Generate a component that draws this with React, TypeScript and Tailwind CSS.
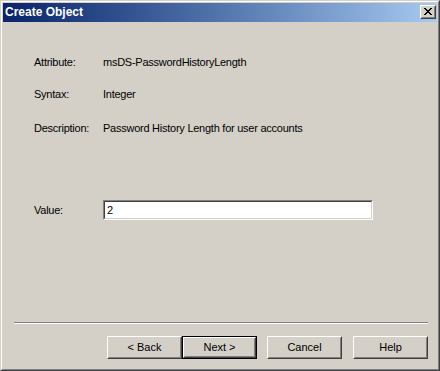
import React from "react";

const font = "font-['Liberation_Sans',Arial,sans-serif]";

function CloseGlyph() {
  const rows = [
    [0, 1, 6, 7],
    [1, 2, 5, 6],
    [2, 3, 4, 5],
    [3, 4],
    [2, 3, 4, 5],
    [1, 2, 5, 6],
    [0, 1, 6, 7],
  ];
  return (
    <svg width="8" height="7" viewBox="0 0 8 7" shapeRendering="crispEdges">
      {rows.map((cols, y) =>
        cols.map((x) => <rect key={`${x}-${y}`} x={x} y={y} width="1" height="1" fill="#000" />)
      )}
    </svg>
  );
}

function WinButton({ label, isDefault }: { label: string; isDefault?: boolean }) {
  const raised = (
    <div className="flex-1 flex border border-t-white border-l-white border-r-[#404040] border-b-[#404040]">
      <div className="flex-1 flex items-center justify-center border border-t-[#D4D0C8] border-l-[#D4D0C8] border-r-[#808080] border-b-[#808080] text-[11px] text-black">
        {label}
      </div>
    </div>
  );
  return (
    <div
      className={
        "box-border w-[75px] h-[23px] flex bg-[#D4D0C8] " + (isDefault ? "border border-black" : "")
      }
    >
      {raised}
    </div>
  );
}

function InfoRow({ label, value }: { label: string; value: string }) {
  return (
    <div className="flex h-[13px] leading-[13px] text-[11px] tracking-[-0.25px] text-black">
      <span className="w-[69px]">{label}</span>
      <span>{value}</span>
    </div>
  );
}

export default function App() {
  return (
    <div className={"w-[440px] h-[371px] " + font}>
      <div className="box-border w-full h-full border border-t-[#D4D0C8] border-l-[#D4D0C8] border-r-[#404040] border-b-[#404040]">
        <div className="box-border w-full h-full border border-t-white border-l-white border-r-[#808080] border-b-[#808080] bg-[#D4D0C8] p-px flex flex-col">
          {/* title bar */}
          <div className="h-[19px] flex items-start justify-between bg-gradient-to-r from-[#0A246A] to-[#A6CAF0]">
            <span className="pl-[2px] pt-[3px] text-[12px] leading-[13px] font-bold text-white">Create Object</span>
            <div className="mt-[2px] mr-[1px] box-border w-[16px] h-[14px] flex border border-t-white border-l-white border-r-[#404040] border-b-[#404040] bg-[#D4D0C8]">
              <div className="flex-1 flex items-start justify-start pl-[2px] pt-[1px] border border-t-[#D4D0C8] border-l-[#D4D0C8] border-r-[#808080] border-b-[#808080]">
                <CloseGlyph />
              </div>
            </div>
          </div>

          {/* body */}
          <div className="flex flex-col pl-[31px]">
            <div className="mt-[34px]">
              <InfoRow label="Attribute:" value="msDS-PasswordHistoryLength" />
            </div>
            <div className="mt-[19px]">
              <InfoRow label="Syntax:" value="Integer" />
            </div>
            <div className="mt-[21px]">
              <InfoRow label="Description:" value="Password History Length for user accounts" />
            </div>
            <div className="mt-[65px] flex items-center text-[11px] tracking-[-0.25px] text-black">
              <span className="w-[69px]">Value:</span>
              <div className="box-border w-[270px] h-[20px] flex border border-t-[#808080] border-l-[#808080] border-r-white border-b-white">
                <div className="flex-1 flex items-center pl-[2px] bg-white border border-t-[#404040] border-l-[#404040] border-r-[#D4D0C8] border-b-[#D4D0C8]">
                  2
                </div>
              </div>
            </div>
          </div>

          {/* separator */}
          <div className="mt-[102px] ml-[11px] mr-[9px] border-t border-t-[#808080] border-b border-b-white" />

          {/* buttons */}
          <div className="mt-[12px] pr-[9px] flex justify-end">
            <WinButton label="< Back" />
            <WinButton label="Next >" isDefault />
            <div className="w-[10px]" />
            <WinButton label="Cancel" />
            <div className="w-[11px]" />
            <WinButton label="Help" />
          </div>
        </div>
      </div>
    </div>
  );
}
